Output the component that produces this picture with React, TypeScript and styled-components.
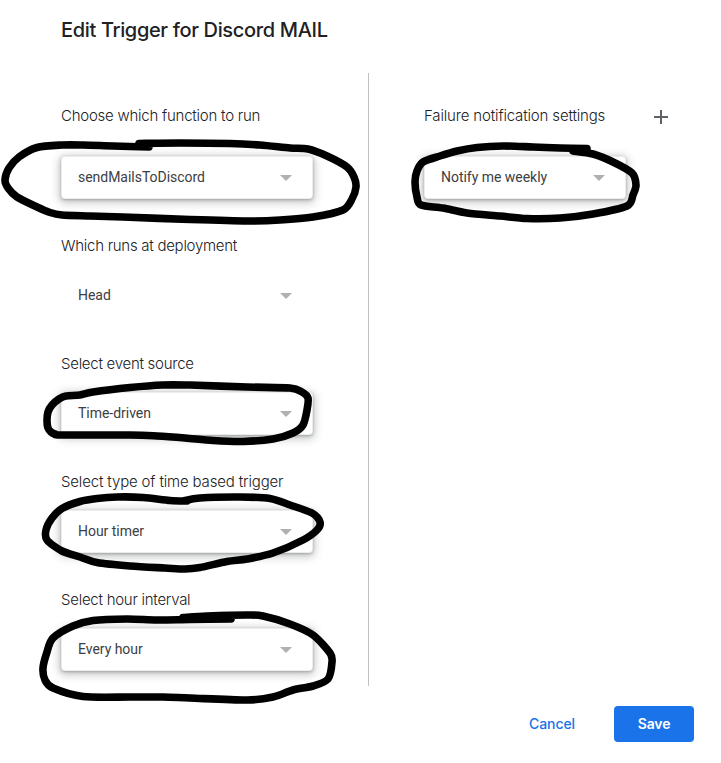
import React from "react";
import styled, { createGlobalStyle } from "styled-components";

const GlobalStyle = createGlobalStyle`
  * { box-sizing: border-box; }
  html, body { margin: 0; background: #fff; }
`;

const display = `"Google Sans", Inter, sans-serif`;

const Dialog = styled.main`
  position: relative;
  width: 721px;
  height: 763px;
  display: flex;
  flex-direction: column;
  overflow: hidden;
  background: #fff;
`;

const Title = styled.h1`
  margin: 0;
  padding: 16px 0 0 61px;
  height: 73px;
  font: 500 20px/28px ${display};
  letter-spacing: -0.34px;
  color: #202124;
  white-space: nowrap;
`;

const Columns = styled.div`
  display: flex;
  height: 613px;
`;

const MainColumn = styled.section`
  width: 369px;
  padding: 31px 0 0 61px;
  border-right: 1px solid #bdc1c6;
`;

const SideColumn = styled.section`
  padding: 31px 0 0 55px;
`;

const Field = styled.div<{ $first?: boolean }>`
  display: flex;
  flex-direction: column;
  gap: ${(p) => (p.$first ? 28 : 16)}px;
  margin-bottom: 35px;
`;

const LabelRow = styled.div`
  display: flex;
  align-items: center;
  height: 24px;
`;

const Label = styled.label<{ $track: number }>`
  font: 300 15px/24px ${display};
  letter-spacing: ${(p) => p.$track}px;
  color: #202124;
  white-space: nowrap;
`;

const AddButton = styled.button`
  display: flex;
  width: 24px;
  height: 24px;
  margin: 1px 0 0 44px;
  padding: 0;
  border: 0;
  background: none;
`;

const Select = styled.button<{ $width?: number; $flat?: boolean }>`
  display: flex;
  align-items: center;
  justify-content: space-between;
  width: ${(p) => p.$width ?? 252}px;
  height: 43px;
  padding: 0 21px 1px 17px;
  border: 0;
  border-radius: 4px;
  background: #fff;
  box-shadow: ${(p) =>
    p.$flat
      ? "none"
      : "inset 0 0 0 1px rgba(60,64,67,.1), 0 1px 3px rgba(60,64,67,.34), 0 2px 9px 2px rgba(60,64,67,.28)"};
  font: 400 14px/20px Roboto, sans-serif;
  letter-spacing: -0.03px;
  color: #3c4043;
  white-space: nowrap;
`;

const Caret = styled.span`
  margin-top: 2px;
  border: 6px solid transparent;
  border-top-color: #b0b0b0;
  border-bottom: 0;
`;

const Footer = styled.footer`
  display: flex;
  justify-content: flex-end;
  padding: 20px 27px 0 0;
`;

const Action = styled.button<{ $primary?: boolean }>`
  width: ${(p) => (p.$primary ? 80 : 124)}px;
  height: 36px;
  padding: 0;
  border: 0;
  border-radius: 4px;
  background: ${(p) => (p.$primary ? "#1a73e8" : "transparent")};
  color: ${(p) => (p.$primary ? "#fff" : "#1a73e8")};
  font: ${(p) => (p.$primary ? 600 : 500)} 14px/36px ${display};
  letter-spacing: -0.1px;
`;

const Ink = styled.svg`
  position: absolute;
  inset: 0;
  pointer-events: none;
  fill: none;
  stroke: #000;
  stroke-width: 7.6;
  stroke-linecap: round;
  stroke-linejoin: round;
`;

type Point = [number, number];

const strokes: Point[][] = [
  [[149,147],[113,146],[83,145],[62,145],[37,147.5],[19,157],[9,168],[5,180],[8,188],[17,197],[37,207],[50,212.5],[62,215],[90,216],[123,217],[190,219.5],[247,221],[280,220],[313,217],[343,210],[352,199],[356,187],[354,177],[347,167],[327,156],[308,149],[290,148],[260,145],[230,143.5],[180,143],[139,143.5]],
  [[587,148.5],[560,148],[533,147],[503,146],[477,147.5],[457,151],[440,156],[423,162],[417,171],[415,182],[417,197],[421,205],[443,208],[467,213],[500,216],[527,218.5],[560,218],[593,214],[627,206],[633,195],[636,185],[632,173],[613,162],[593,154],[573,151]],
  [[190,385],[163,385],[130,387.5],[93,392],[80,395],[66,396],[59,399],[52,405],[48,412],[47,421],[48,428],[51,432],[55,434],[62,435],[130,435],[157,436],[185,438],[213,440.5],[243,441.5],[273,439],[293,433],[303,425],[307,410],[308,398],[302,392],[290,388],[247,387],[190,385]],
  [[187,501],[170,500.5],[143,497.5],[117,497],[97,498.5],[80,501.5],[62,508.5],[52,518],[46,530],[47,540],[62,551],[80,557],[97,562.5],[130,566],[165,568],[185,569],[200,567.5],[227,561.5],[247,559],[273,553],[303,540],[317,530],[320,522],[312,513],[290,505],[270,498.5],[240,497],[200,498],[183,501]],
  [[231,619],[190,619.5],[157,620],[127,619],[93,620.5],[73,626],[53,638],[47,652],[43,668],[45,680],[53,688],[83,696.5],[130,697],[163,697],[190,698],[247,700],[273,697],[293,690],[313,686],[328,679],[332,662],[330,653],[313,635],[290,624],[263,616],[247,615],[207,616],[183,617.5]],
];

// Joins the sampled points with a gently tensioned cubic spline.
const spline = (points: Point[]) =>
  points.slice(1).reduce((d, p, i) => {
    const a = points[i];
    const before = points[i - 1] ?? a;
    const after = points[i + 2] ?? p;
    const k = 7;
    return `${d}C${a[0] + (p[0] - before[0]) / k} ${a[1] + (p[1] - before[1]) / k} ${p[0] - (after[0] - a[0]) / k} ${p[1] - (after[1] - a[1]) / k} ${p[0]} ${p[1]}`;
  }, `M${points[0][0]} ${points[0][1]}`);

const fields = [
  { label: "Choose which function to run", value: "sendMailsToDiscord", track: -0.24 },
  { label: "Which runs at deployment", value: "Head", flat: true, track: -0.27 },
  { label: "Select event source", value: "Time-driven", track: -0.27 },
  { label: "Select type of time based trigger", value: "Hour timer", track: -0.16 },
  { label: "Select hour interval", value: "Every hour", track: -0.26 },
];

export default function App() {
  return (
    <>
      <GlobalStyle />
      <Dialog>
        <Title>Edit Trigger for Discord MAIL</Title>
        <Columns>
          <MainColumn>
            {fields.map((f, i) => (
              <Field key={f.label} $first={i === 0}>
                <LabelRow>
                  <Label $track={f.track}>{f.label}</Label>
                </LabelRow>
                <Select $flat={f.flat}>
                  {f.value}
                  <Caret />
                </Select>
              </Field>
            ))}
          </MainColumn>
          <SideColumn>
            <Field $first>
              <LabelRow>
                <Label $track={-0.16}>Failure notification settings</Label>
                <AddButton aria-label="Add notification">
                  <svg width="24" height="24" viewBox="0 0 24 24" fill="#5f6368">
                    <path d="M19 13h-6v6h-2v-6H5v-2h6V5h2v6h6v2z" />
                  </svg>
                </AddButton>
              </LabelRow>
              <Select $width={202}>
                Notify me weekly
                <Caret />
              </Select>
            </Field>
          </SideColumn>
        </Columns>
        <Footer>
          <Action>Cancel</Action>
          <Action $primary>Save</Action>
        </Footer>
        <Ink width="721" height="763" viewBox="0 0 721 763">
          {strokes.map((points, i) => (
            <path key={i} d={spline(points)} />
          ))}
        </Ink>
      </Dialog>
    </>
  );
}
